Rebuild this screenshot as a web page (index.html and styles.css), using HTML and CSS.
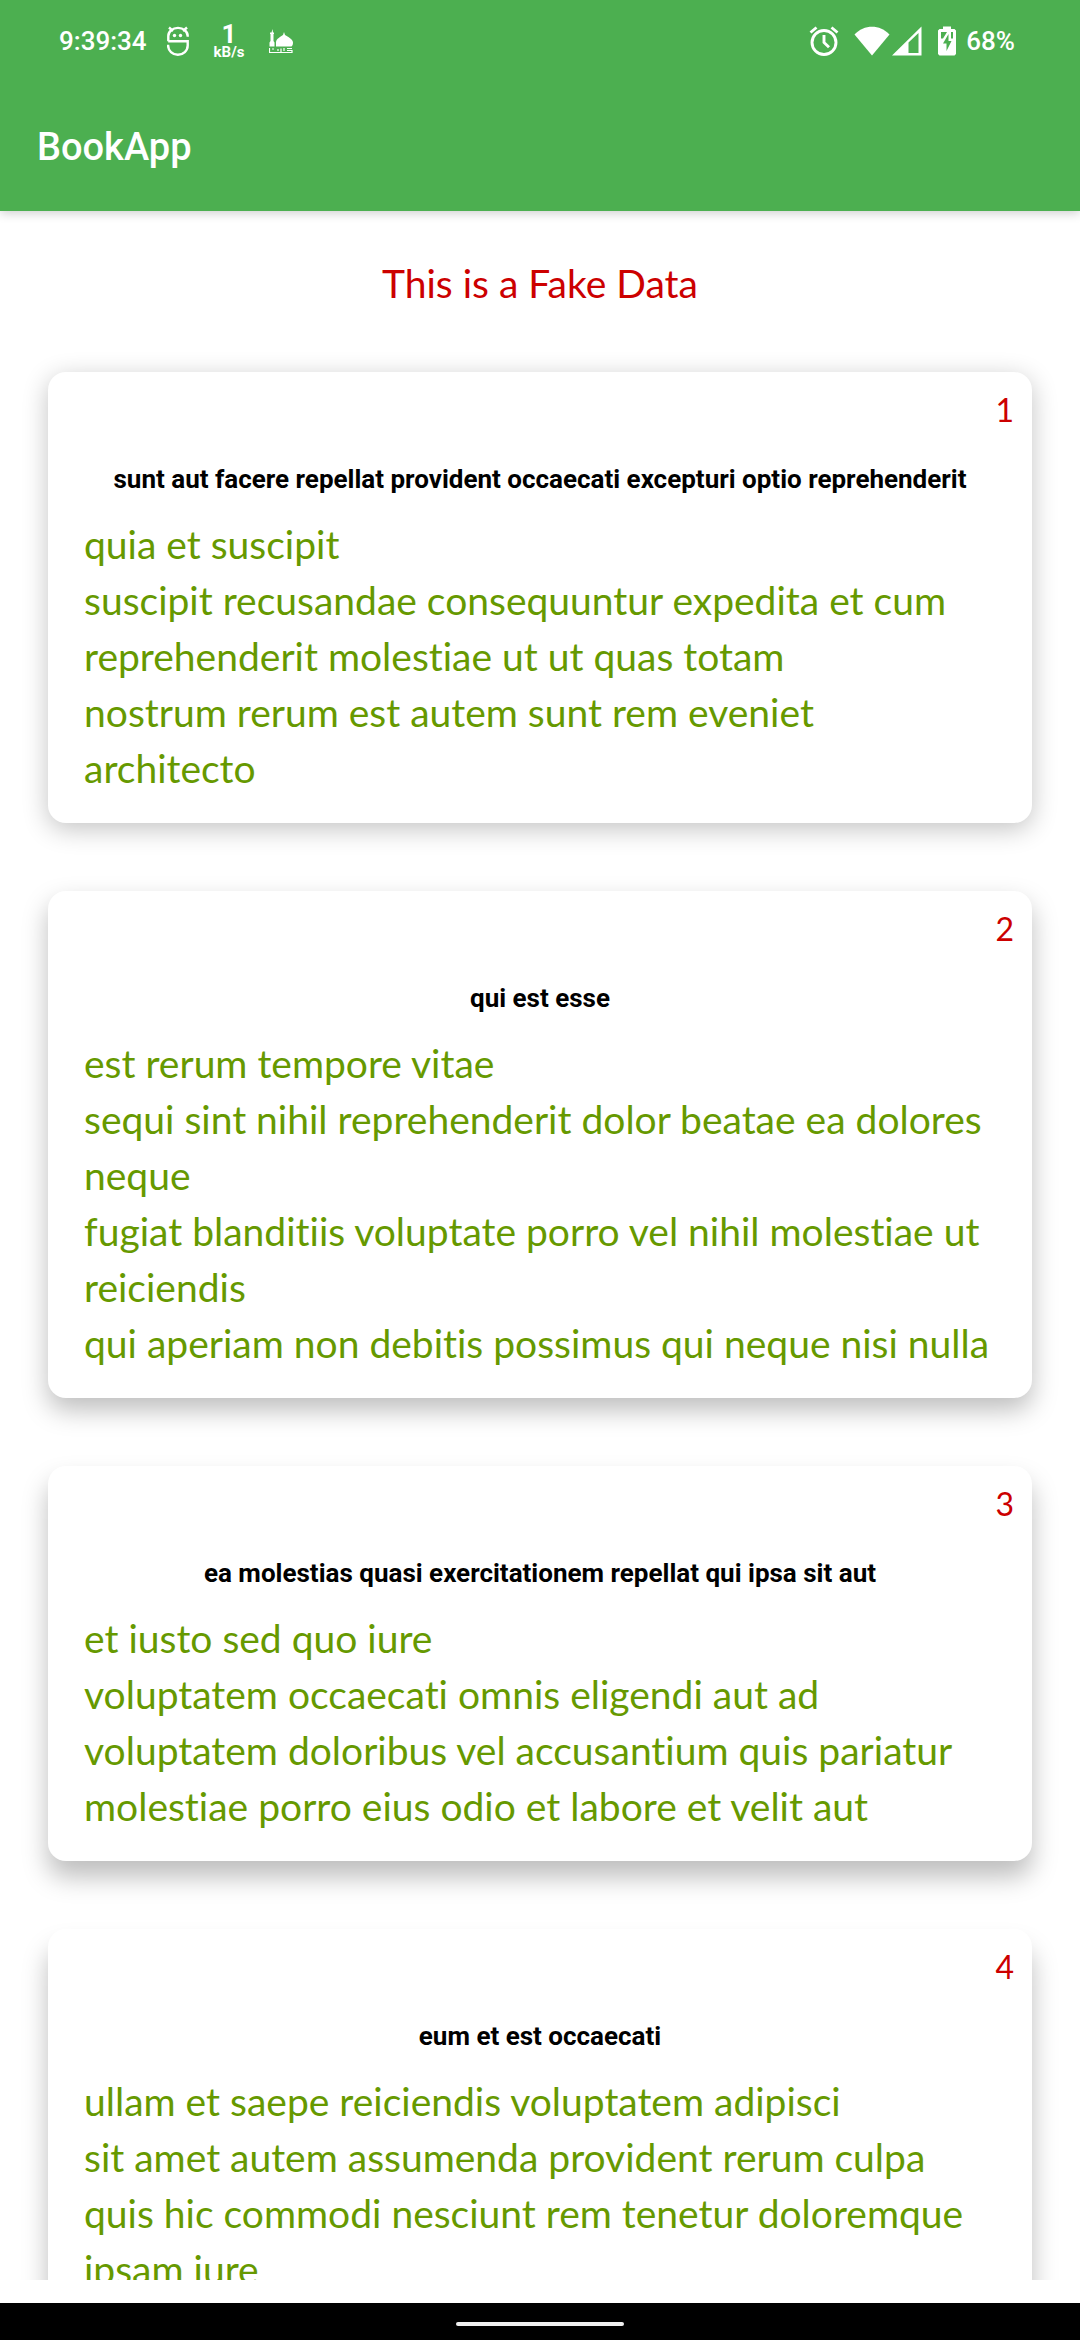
FILE: index.html
```html
<!DOCTYPE html>
<html lang="en">
<head>
<meta charset="utf-8">
<meta name="viewport" content="width=device-width">
<title>BookApp</title>
<link rel="stylesheet" href="styles.css">
</head>
<body>
<header class="top">
  <div class="status">
    <div class="status-side">
      <span class="clock">9:39:34</span>
      <svg class="robot" width="22" height="30" viewBox="0 0 22 30" fill="none" stroke="#fff" stroke-width="2.4"><path d="M1.300 15.300V10a9.500 8 0 0 1 19.400 0v.8M1.200 15.300h19.500v4.200a9.800 9.200 0 0 1-19.600 0v-.7M2 1.500l4 3.500M20 1.500L16 5"/><circle cx="7.500" cy="9.500" r="1.700" fill="#fff" stroke="none"/><circle cx="13.500" cy="9.500" r="1.700" fill="#fff" stroke="none"/></svg>
      <span class="speed"><b class="speed-value">1</b><span class="speed-unit">kB/s</span></span>
      <svg class="mosque" width="24" height="24" viewBox="0 0 24 24" fill="#fff"><path d="M7 17.500V13c0-3 5-5.500 7-7l1-3 1 3c2 1.500 8 4 8 7.500 0 2-.5 3-1.500 4zM.5 17.500v-4l1-1.500V5H1V3.500h1.500L3.500 0l.5 3.500h1V5h-.5v7l1 1.500v4z"/><path d="M.5 19v4.500H23v-2h-5M9 20v2M12 19.500V23M15 19v3M5 20H3M18 19.500h5" fill="none" stroke="#fff" stroke-width="1.200"/></svg>
    </div>
    <div class="status-side">
      <svg class="alarm" width="30" height="30" viewBox="0 0 30 30" fill="none" stroke="#fff" stroke-width="2.900"><circle cx="15" cy="16.500" r="12"/><path d="M15 9v7.500l5 4.800M1.500 6.500l6-5M28.500 6.500l-6-5"/></svg>
      <svg class="wifi" width="36" height="30" viewBox="0 0 36 30" fill="#fff"><path d="M18 29.500L.5 8.500C10-2 26-2 35.500 8.500z"/></svg>
      <svg class="signal" width="30" height="30" viewBox="0 0 30 30" fill="#fff"><path fill-rule="evenodd" d="M0 29.500L29.500.5v29zM16.500 16.500v10.500h10V7z"/></svg>
      <svg class="battery" width="18" height="30" viewBox="0 0 18 30" fill="#fff"><path fill-rule="evenodd" d="M5 .5h8V3h3.500L18 4.500V28l-1.500 1.500h-15L0 28V4.500L1.500 3H5zM3 6v6.500h2L9 6zM13 6v6.500h2V6zM10.500 8L5 17.500h3.500V25L13.500 15h-3z"/></svg>
      <span class="percent">68%</span>
    </div>
  </div>
  <h1 class="app-title">BookApp</h1>
</header>
<main class="list">
  <h2 class="heading">This is a Fake Data</h2>
  <article class="card">
    <span class="number">1</span>
    <h3 class="title">sunt aut facere repellat provident occaecati excepturi optio reprehenderit</h3>
    <p class="text">quia et suscipit<br>suscipit recusandae consequuntur expedita et cum<br>reprehenderit molestiae ut ut quas totam<br>nostrum rerum est autem sunt rem eveniet<br>architecto</p>
  </article>
  <article class="card">
    <span class="number">2</span>
    <h3 class="title">qui est esse</h3>
    <p class="text">est rerum tempore vitae<br>sequi sint nihil reprehenderit dolor beatae ea dolores<br>neque<br>fugiat blanditiis voluptate porro vel nihil molestiae ut<br>reiciendis<br>qui aperiam non debitis possimus qui neque nisi nulla</p>
  </article>
  <article class="card">
    <span class="number">3</span>
    <h3 class="title">ea molestias quasi exercitationem repellat qui ipsa sit aut</h3>
    <p class="text">et iusto sed quo iure<br>voluptatem occaecati omnis eligendi aut ad<br>voluptatem doloribus vel accusantium quis pariatur<br>molestiae porro eius odio et labore et velit aut</p>
  </article>
  <article class="card">
    <span class="number">4</span>
    <h3 class="title">eum et est occaecati</h3>
    <p class="text">ullam et saepe reiciendis voluptatem adipisci<br>sit amet autem assumenda provident rerum culpa<br>quis hic commodi nesciunt rem tenetur doloremque<br>ipsam iure</p>
  </article>
</main>
<footer class="gesture"><span class="pill"></span></footer>
</body>
</html>
```
FILE: styles.css
```css
* { box-sizing: border-box; margin: 0; }

body {
  display: flex;
  flex-direction: column;
  height: 100vh;
  background: #fff;
  font-family: Roboto, sans-serif;
}

.top {
  flex: none;
  background: #4caf50;
  color: #fff;
  box-shadow: 0 2px 10px rgba(0, 0, 0, 0.2);
}

.status {
  display: flex;
  justify-content: space-between;
  height: 82px;
  padding: 0 65px 0 59px;
}

.status-side { display: flex; align-items: center; }

.clock, .percent { font-size: 26px; font-weight: 500; line-height: 32px; }

.robot { margin-left: 20px; }
.speed {
  display: flex;
  flex-direction: column;
  align-items: center;
  margin-left: 25px;
}
.speed-value { font-size: 26px; line-height: 22px; }
.speed-unit { font-size: 15px; font-weight: 700; line-height: 14px; }
.mosque { margin-left: 25px; }
.wifi { margin-left: 15px; }
.signal { margin-left: 2px; }
.battery { margin: 0 10px 0 16px; }

.app-title {
  padding: 43px 37px 42px;
  font-size: 38px;
  font-weight: 500;
  line-height: 44px;
}

.list {
  flex: 1;
  min-height: 0;
  overflow: hidden;
  margin-bottom: 23px;
  padding: 44px 48px 0;
}

.heading, .number, .text {
  font-family: "Coming Soon", Lato, sans-serif;
  font-weight: 400;
  font-variant-ligatures: none;
}

.heading {
  margin-bottom: 61px;
  color: #c00;
  font-size: 39px;
  line-height: 56px;
  text-align: center;
}

.card {
  display: flex;
  flex-direction: column;
  margin-bottom: 68px;
  padding: 16px 18px 27px;
  border-radius: 18px;
  background: #fff;
  box-shadow: 0 6px 26px rgba(0, 0, 0, 0.24);
}
.card:nth-of-type(2) { box-shadow: 0 12px 26px rgba(0, 0, 0, 0.26); }
.card:nth-of-type(3) { box-shadow: 0 16px 26px rgba(0, 0, 0, 0.26); }
.card:nth-of-type(4) { box-shadow: 0 20px 26px rgba(0, 0, 0, 0.26); }

.number { align-self: flex-end; color: #c00; font-size: 32px; line-height: 44px; }

.title {
  padding: 31px 0 21px;
  font-size: 26px;
  font-weight: 700;
  line-height: 32px;
  text-align: center;
}

.text {
  padding: 0 18px;
  color: #690;
  font-size: 39px;
  line-height: 56px;
  white-space: nowrap;
}

.gesture {
  flex: none;
  display: flex;
  justify-content: center;
  align-items: center;
  height: 37px;
  padding-top: 4px;
  background: #000;
}
.pill { width: 168px; height: 4px; border-radius: 2px; background: #f0f0f0; }
```
